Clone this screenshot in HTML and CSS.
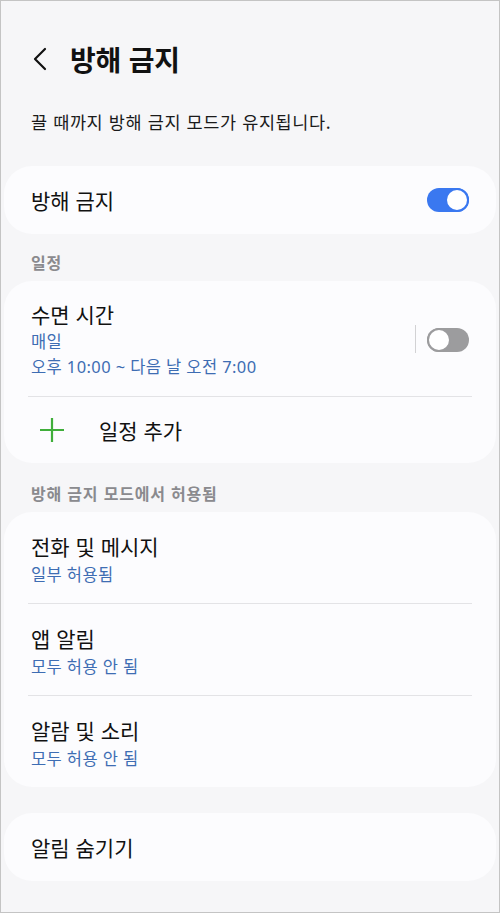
FILE: index.html
```html
<!DOCTYPE html>
<html lang="ko">
<head>
<meta charset="utf-8">
<link rel="stylesheet" href="styles.css">
</head>
<body>
<div class="screen">
  <header class="top">
    <svg class="back" width="16" height="24" viewBox="0 0 16 24"><path d="M13 2 L3 12 L13 22" fill="none" stroke="#111" stroke-width="2.2" stroke-linecap="round" stroke-linejoin="round"/></svg>
    <h1 class="title">방해 금지</h1>
  </header>
  <p class="desc">끌 때까지 방해 금지 모드가 유지됩니다.</p>

  <section class="card first">
    <div class="row main-row">
      <span class="label">방해 금지</span>
      <span class="toggle on"><span class="knob"></span></span>
    </div>
  </section>

  <h2 class="section">일정</h2>
  <section class="card">
    <div class="row sched">
      <div class="texts">
        <div class="label">수면 시간</div>
        <div class="sub">매일</div>
        <div class="sub">오후 10:00 ~ 다음 날 오전 7:00</div>
      </div>
      <span class="vdiv"></span>
      <span class="toggle off"><span class="knob"></span></span>
    </div>
    <div class="divider"></div>
    <div class="row add">
      <svg class="plus" width="26" height="26" viewBox="0 0 26 26"><path d="M13 1 V25 M1 13 H25" stroke="#3fae3a" stroke-width="2.2"/></svg>
      <span class="label">일정 추가</span>
    </div>
  </section>

  <h2 class="section second">방해 금지 모드에서 허용됨</h2>
  <section class="card">
    <div class="row item">
      <div class="label">전화 및 메시지</div>
      <div class="sub">일부 허용됨</div>
    </div>
    <div class="divider"></div>
    <div class="row item">
      <div class="label">앱 알림</div>
      <div class="sub">모두 허용 안 됨</div>
    </div>
    <div class="divider"></div>
    <div class="row item">
      <div class="label">알람 및 소리</div>
      <div class="sub">모두 허용 안 됨</div>
    </div>
  </section>

  <section class="card last">
    <div class="row main-row">
      <span class="label">알림 숨기기</span>
    </div>
  </section>
</div>
</body>
</html>
```
FILE: styles.css
```css
html, body {
  margin: 0;
  padding: 0;
}
body {
  font-family: "Noto Sans CJK KR", "Noto Sans", sans-serif;
  background: #f6f6f8;
  color: #111;
}
.screen {
  box-sizing: border-box;
  width: 500px;
  height: 913px;
  border: 1px solid #c4c4c4;
  padding: 0 3px;
  background: #f6f6f8;
  overflow: hidden;
}
.top {
  display: flex;
  align-items: center;
  height: 60px;
  margin-top: 28px;
  padding-left: 28px;
}
.back {
  display: block;
}
.title {
  margin: 0 0 0 22px;
  font-size: 28px;
  font-weight: 700;
  letter-spacing: -0.2px;
}
.desc {
  margin: 20px 0 0 27px;
  font-size: 17.5px;
  letter-spacing: 0.6px;
  line-height: 26px;
  color: #1a1a1a;
}
.card {
  background: #fcfcfe;
  border-radius: 28px;
}
.first {
  margin-top: 31px;
}
.row {
  padding: 0 27px;
}
.main-row {
  display: flex;
  align-items: center;
  justify-content: space-between;
  height: 68px;
}
.label {
  font-size: 21px;
  line-height: 28px;
  color: #111;
}
.sub {
  font-family: "Noto Sans", "Noto Sans CJK KR", sans-serif;
  font-size: 16.5px;
  letter-spacing: 0.4px;
  line-height: 25px;
  color: #3e6db3;
}
.section {
  margin: 16px 0 0 27px;
  font-size: 16px;
  letter-spacing: 0.8px;
  font-weight: 700;
  line-height: 24px;
  color: #8a8a8e;
  height: 31px;
}
.section.second {
  margin-top: 18px;
}
.toggle {
  position: relative;
  box-sizing: border-box;
  width: 42px;
  height: 24px;
  border-radius: 12px;
  display: block;
}
.toggle .knob {
  position: absolute;
  top: 0;
  box-sizing: border-box;
  width: 24px;
  height: 24px;
  border-radius: 50%;
  background: #fff;
}
.toggle.on {
  background: #3a78f0;
}
.toggle.on .knob {
  right: 0;
  border: 2.5px solid #3a78f0;
}
.toggle.off {
  background: #9c9c9e;
}
.toggle.off .knob {
  left: 0;
  border: 2px solid #9c9c9e;
}
.sched {
  display: flex;
  align-items: center;
  padding-top: 19px;
  padding-bottom: 17px;
}
.sched .texts {
  flex: 1;
}
.sched .label {
  margin-bottom: 1px;
}
.vdiv {
  width: 1px;
  height: 28px;
  background: #d2d2d4;
  margin-right: 11px;
  margin-bottom: 2px;
}
.divider {
  height: 1px;
  background: #e3e3e6;
  margin: 0 24px;
}
.add {
  display: flex;
  align-items: center;
  height: 66px;
  padding-left: 35px;
}
.add .label {
  margin-left: 34px;
}
.item {
  padding-top: 20px;
  padding-bottom: 16px;
}
.item .label {
  margin-bottom: 2px;
}
.last {
  margin-top: 26px;
}
```
